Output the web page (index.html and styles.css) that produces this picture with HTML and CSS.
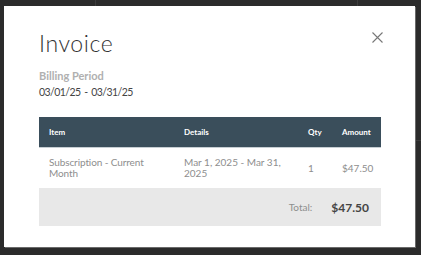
FILE: index.html
```html
<!DOCTYPE html>
<html>
<head>
<meta charset="utf-8">
<link rel="stylesheet" href="styles.css">
</head>
<body>
<div class="page">
  <div class="bg-line bg-line-a"></div>
  <div class="bg-line bg-line-b"></div>
  <div class="bg-hline"></div>
  <div class="modal">
    <div class="modal-head">
      <h1 class="title">Invoice</h1>
      <button class="close" aria-label="Close">
        <svg width="11" height="11" viewBox="0 0 11 11"><path d="M0.5 0.5L10.5 10.5M10.5 0.5L0.5 10.5" stroke="#777" stroke-width="1.1" fill="none"/></svg>
      </button>
    </div>
    <div class="period">
      <div class="period-label">Billing Period</div>
      <div class="period-value">03/01/25 - 03/31/25</div>
    </div>
    <div class="table">
      <div class="row head">
        <div class="c-item">Item</div>
        <div class="c-details">Details</div>
        <div class="c-qty">Qty</div>
        <div class="c-amount">Amount</div>
      </div>
      <div class="row body">
        <div class="c-item">Subscription - Current Month</div>
        <div class="c-details">Mar 1, 2025 - Mar 31, 2025</div>
        <div class="c-qty">1</div>
        <div class="c-amount">$47.50</div>
      </div>
      <div class="total">
        <span class="total-label">Total:</span>
        <span class="total-value">$47.50</span>
      </div>
    </div>
  </div>
</div>
</body>
</html>
```
FILE: styles.css
```css
html, body {
  margin: 0;
  padding: 0;
}
body {
  background: #2b2b2b;
  font-family: Lato, "Liberation Sans", sans-serif;
  width: 421px;
  height: 255px;
  overflow: hidden;
}
.page {
  position: relative;
  width: 421px;
  height: 255px;
  padding: 6px 0 0 4px;
  box-sizing: border-box;
}
.bg-line {
  position: absolute;
  top: 0;
  width: 1px;
  height: 6px;
  background: #3c3c3c;
}
.bg-line-a { left: 95px; }
.bg-line-b { left: 357px; }
.bg-hline {
  position: absolute;
  left: 416px;
  top: 140px;
  width: 5px;
  height: 1px;
  background: #3c3c3c;
}
.modal {
  position: relative;
  width: 411px;
  height: 241px;
  background: #fff;
  box-sizing: border-box;
  padding: 24px 34px 0 35px;
  box-shadow: 1px 1px 0 #6a6a6a;
}
.modal-head {
  display: flex;
  justify-content: space-between;
  align-items: flex-start;
}
.title {
  margin: 0;
  font-size: 23px;
  font-weight: 300;
  line-height: 26px;
  color: #333;
  letter-spacing: 0.6px;
}
.close {
  border: 0;
  background: none;
  padding: 0;
  margin: 2px -2px 0 0;
  width: 11px;
  height: 11px;
  display: block;
}
.close svg { display: block; }
.period {
  margin-top: 13px;
}
.period-label {
  font-size: 11px;
  font-weight: 700;
  color: #b0b0b0;
  line-height: 13px;
}
.period-value {
  font-size: 10.5px;
  color: #444;
  line-height: 14px;
  margin-top: 3px;
  letter-spacing: -0.55px;
  word-spacing: 1.5px;
}
.table {
  margin-top: 18px;
  width: 342px;
}
.row {
  display: grid;
  grid-template-columns: 145px 124px 34px 39px;
  align-items: center;
}
.row > div {
  padding-left: 10px;
}
.row > .c-details,
.row > .c-qty,
.row > .c-amount { padding-left: 0; }
.head {
  background: #3a4e5b;
  height: 31px;
  color: #fff;
  font-size: 8px;
  font-weight: 700;
  border-bottom: 1px solid #c6ced3;
  box-sizing: border-box;
}
.body {
  height: 40px;
  color: #8e8e8e;
  font-size: 10px;
  line-height: 11px;
}
.body .c-item { padding-right: 20px; letter-spacing: -0.1px; }
.body .c-details { padding-right: 20px; }
.total {
  background: #e8e8e8;
  height: 38px;
  display: flex;
  justify-content: flex-end;
  align-items: center;
  padding-right: 12px;
}
.total-label {
  font-size: 10px;
  color: #8e8e8e;
  margin-right: 19px;
}
.total-value {
  font-size: 12px;
  font-weight: 700;
  color: #444;
}
```
